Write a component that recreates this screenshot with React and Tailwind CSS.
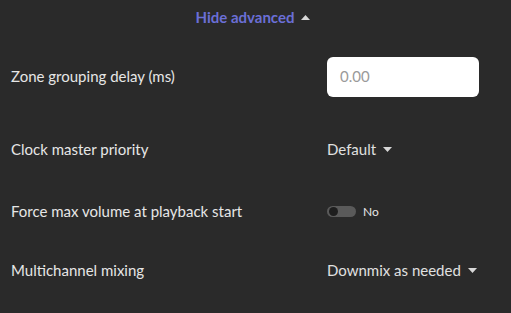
const font = { fontFamily: 'Lato, "Noto Sans", sans-serif' }

function Caret({ up = false, className = 'ml-[7px]' }) {
  return (
    <svg width="9" height="5" viewBox="0 0 9 5" className={`shrink-0 ${className}`}>
      {up ? <path d="M0 5 L4.5 0 L9 5 Z" fill="#d8d8d8" /> : <path d="M0 0 L9 0 L4.5 5 Z" fill="#d8d8d8" />}
    </svg>
  )
}

function Row({ label, className = '', children }) {
  return (
    <div className={`flex items-center ${className}`}>
      <div className="w-[327px] pl-[11px] text-[15px] text-[#e6e6e6]">{label}</div>
      <div className="flex items-center">{children}</div>
    </div>
  )
}

export default function App() {
  return (
    <div className="h-[313px] w-[511px] overflow-hidden bg-[#2a2a2a]" style={font}>
      <div className="flex items-center justify-center pt-[6px] pr-[5px]">
        <span className="text-[15px] font-bold text-[#6b6fd6]">Hide advanced</span>
        <Caret up className="ml-[7px]" />
      </div>

      <Row label="Zone grouping delay (ms)" className="mt-[28px] h-[40px]">
        <div className="flex h-[40px] w-[152px] items-center rounded-md bg-white pl-[13px] text-[15px] text-[#9a9a9a]">0.00</div>
      </Row>

      <Row label="Clock master priority" className="mt-[43px] h-[20px]">
        <span className="text-[15px] text-[#e0e0e0]">Default</span>
        <Caret />
      </Row>

      <Row label="Force max volume at playback start" className="mt-[42px] h-[20px]">
        <div className="flex h-[11px] w-[29px] items-center rounded-full bg-[#5a5a5a] pl-[2px]">
          <div className="h-[9px] w-[9px] rounded-full bg-[#1e1e1e]" />
        </div>
        <span className="ml-[7px] text-[12px] text-[#e6e6e6]">No</span>
      </Row>

      <Row label="Multichannel mixing" className="mt-[39px] h-[20px]">
        <span className="text-[15px] text-[#e0e0e0]">Downmix as needed</span>
        <Caret />
      </Row>
    </div>
  )
}
